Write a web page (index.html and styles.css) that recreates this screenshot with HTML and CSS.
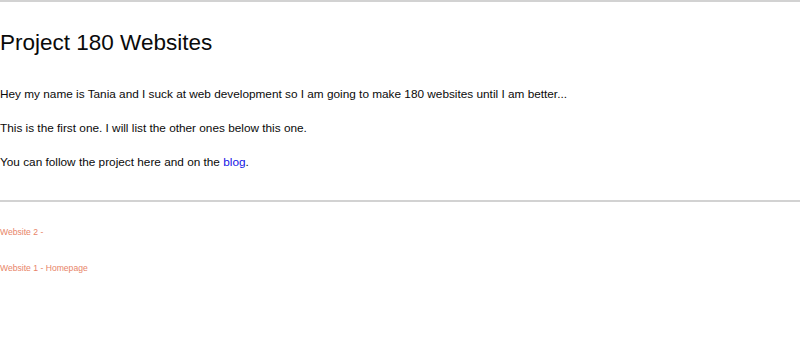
FILE: index.html
```html
<!DOCTYPE html>
<html lang="en">
<head>
    <meta charset="UTF-8">
    <meta name="viewport" content="width=device-width, initial-scale=1.0">
    <title>Project 180 Websites</title>
    <link rel="stylesheet" href="styles.css">
</head>
<body>
    <hr class="rule">
    <div class="intro">
        <h1>Project 180 Websites</h1>
        <p>Hey my name is Tania and I suck at web development so I am going to make 180 websites until I am better...</p>
        <p>This is the first one. I will list the other ones below this one.</p>
        <p>You can follow the project here and on the <a href="#">blog</a>.</p>
    </div>
    <hr class="rule">
    <ul class="site-list">
        <li><a href="#">Website 2 - </a></li>
        <li><a href="#">Website 1 - Homepage</a></li>
    </ul>
</body>
</html>
```

FILE: styles.css
```css
*{
    padding:0;
    margin:0;
}
body{
    font-family: "Liberation Sans", Arial, sans-serif;
    color: rgb(10,10,10);
    background: #fff;
}
.rule{
    border: none;
    height: 2px;
    background-color: rgb(210,210,210);
}
.intro{
    padding: 28px 0 30px;
}
.intro h1{
    font-size: 22.5px;
    font-weight: normal;
    line-height: 26px;
    margin-bottom: 30px;
}
.intro p{
    font-size: 11.8px;
    line-height: 16px;
    margin-bottom: 18px;
}
.intro p:last-child{
    margin-bottom: 0;
}
.intro a{
    color: rgb(20,20,230);
    text-decoration: none;
}
.site-list{
    list-style: none;
    padding-top: 25px;
}
.site-list li{
    font-size: 8.6px;
    line-height: 11px;
    margin-bottom: 25px;
}
.site-list a{
    color: rgb(232,132,104);
    text-decoration: none;
}
```
